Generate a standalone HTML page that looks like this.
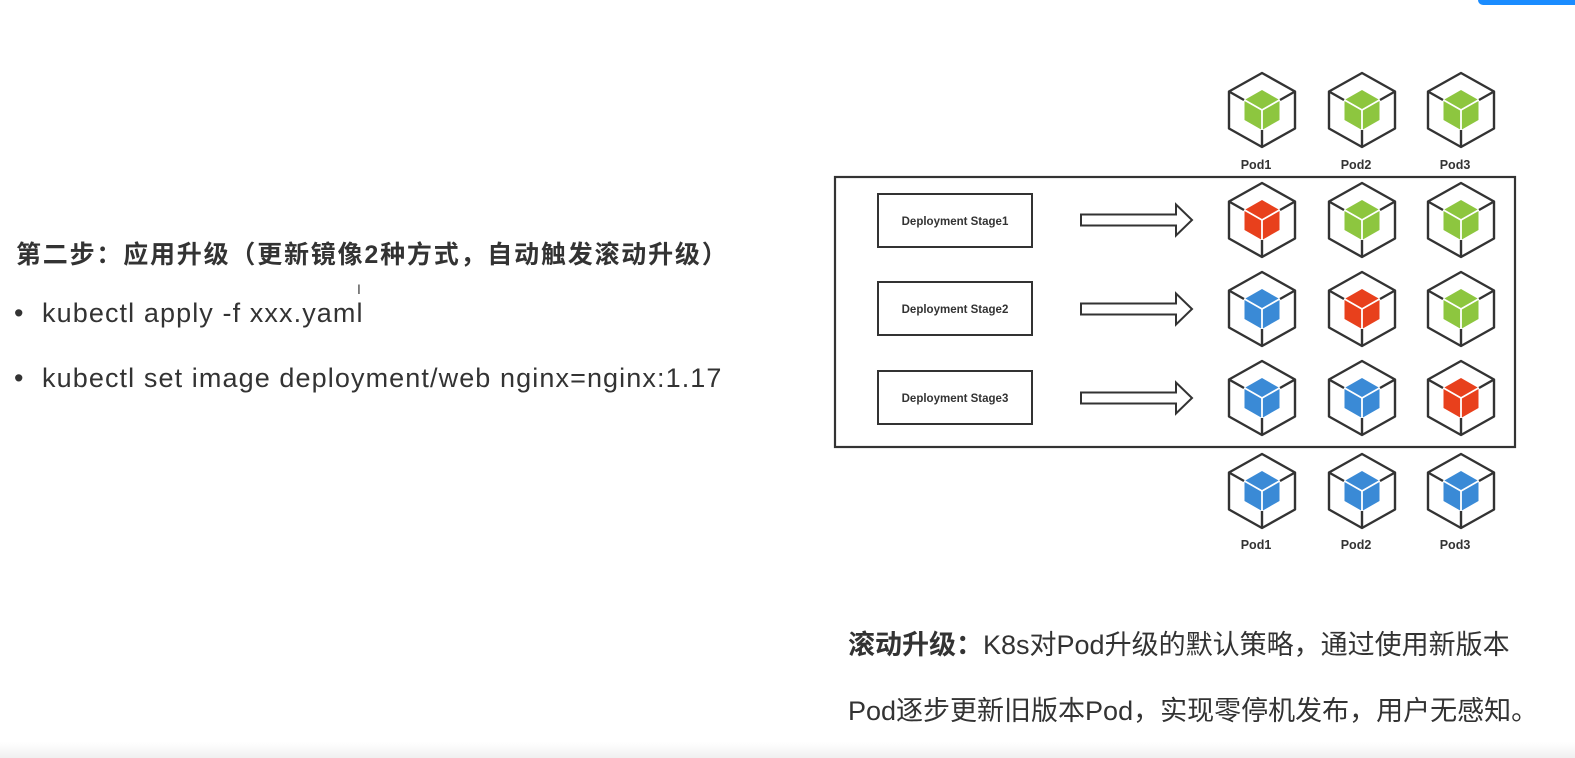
<!DOCTYPE html>
<html><head><meta charset="utf-8"><style>
html,body{margin:0;padding:0;background:#fff;}
body{width:1575px;height:758px;position:relative;overflow:hidden;font-family:"Liberation Sans","Noto Sans CJK SC",sans-serif;color:#333;}
.t{position:absolute;white-space:nowrap;}
.h{left:16px;top:235px;font-size:25px;font-weight:bold;letter-spacing:1.8px;color:#333;}
.b{left:42px;font-size:27px;letter-spacing:1.1px;color:#333;}
.d{left:14px;font-size:27px;color:#333;}
.r{left:848px;font-size:27px;color:#333;}
.bot{position:absolute;left:0;right:0;bottom:0;height:16px;background:linear-gradient(#fff,#f0f0f0);}
.bar{position:absolute;left:1478px;top:0;width:97px;height:5px;background:#1a8cff;border-bottom-left-radius:6px;}
</style></head><body>
<div class="bar"></div>
<div class="t h">第二步：应用升级（更新镜像2种方式，自动触发滚动升级）</div>
<div class="t d" style="top:298px">•</div>
<div class="t b" style="top:298px">kubectl apply -f xxx.yaml</div>
<div class="t d" style="top:363px">•</div>
<div class="t b" style="top:363px">kubectl set image deployment/web nginx=nginx:1.17</div>
<div class="t" style="left:357px;top:281px;font-size:14px;color:#444">I</div>
<div class="t r" style="top:623px"><b>滚动升级：</b>K8s对Pod升级的默认策略，通过使用新版本</div>
<div class="t r" style="top:689px">Pod逐步更新旧版本Pod，实现零停机发布，用户无感知。</div>
<svg width="1575" height="758" style="position:absolute;left:0;top:0">
<defs>
<g id="hex" fill="none" stroke="#333" stroke-width="2.4" stroke-linejoin="round">
<polygon points="0,-37 33,-18.5 33,18.5 0,37 -33,18.5 -33,-18.5"/>
<line x1="-33" y1="-18.5" x2="-18" y2="-10"/><line x1="33" y1="-18.5" x2="18" y2="-10"/><line x1="0" y1="37" x2="0" y2="20"/>
</g>
<g id="seam" stroke="#fff" stroke-width="1.8" fill="none"><polyline points="-17.5,-10 0,0 17.5,-10"/><line x1="0" y1="0" x2="0" y2="20"/></g>
<polygon id="cube" points="0,-20 17.5,-10 17.5,10 0,20 -17.5,10 -17.5,-10"/>
<g id="G"><use href="#hex"/><use href="#cube" fill="#8dc63f"/><use href="#seam"/></g>
<g id="R"><use href="#hex"/><use href="#cube" fill="#e8401c"/><use href="#seam"/></g>
<g id="B"><use href="#hex"/><use href="#cube" fill="#3a8ad6"/><use href="#seam"/></g>
<polygon id="arr" points="0,-5.5 95,-5.5 95,-15.5 111,0 95,15.5 95,5.5 0,5.5" fill="#fff" stroke="#333" stroke-width="2"/>
</defs>
<rect x="835" y="177" width="680" height="270" fill="none" stroke="#333" stroke-width="2.2"/>
<g fill="none" stroke="#333" stroke-width="2">
<rect x="878" y="194" width="154" height="53"/><rect x="878" y="282" width="154" height="53"/><rect x="878" y="371" width="154" height="53"/>
</g>
<g font-family="Liberation Sans,sans-serif" font-weight="bold" font-size="11.5" fill="#333" text-anchor="middle">
<text x="955" y="225">Deployment Stage1</text><text x="955" y="313">Deployment Stage2</text><text x="955" y="402">Deployment Stage3</text>
</g>
<use href="#arr" x="1081" y="220"/><use href="#arr" x="1081" y="309"/><use href="#arr" x="1081" y="398"/>
<use href="#G" x="1262" y="110"/><use href="#G" x="1362" y="110"/><use href="#G" x="1461" y="110"/>
<use href="#R" x="1262" y="220"/><use href="#G" x="1362" y="220"/><use href="#G" x="1461" y="220"/>
<use href="#B" x="1262" y="309"/><use href="#R" x="1362" y="309"/><use href="#G" x="1461" y="309"/>
<use href="#B" x="1262" y="398"/><use href="#B" x="1362" y="398"/><use href="#R" x="1461" y="398"/>
<use href="#B" x="1262" y="491"/><use href="#B" x="1362" y="491"/><use href="#B" x="1461" y="491"/>
<g font-family="Liberation Sans,sans-serif" font-weight="bold" font-size="12.5" fill="#333" text-anchor="middle">
<text x="1256" y="169">Pod1</text><text x="1356" y="169">Pod2</text><text x="1455" y="169">Pod3</text>
<text x="1256" y="549">Pod1</text><text x="1356" y="549">Pod2</text><text x="1455" y="549">Pod3</text>
</g>
</svg>
<div class="bot"></div>
</body></html>
